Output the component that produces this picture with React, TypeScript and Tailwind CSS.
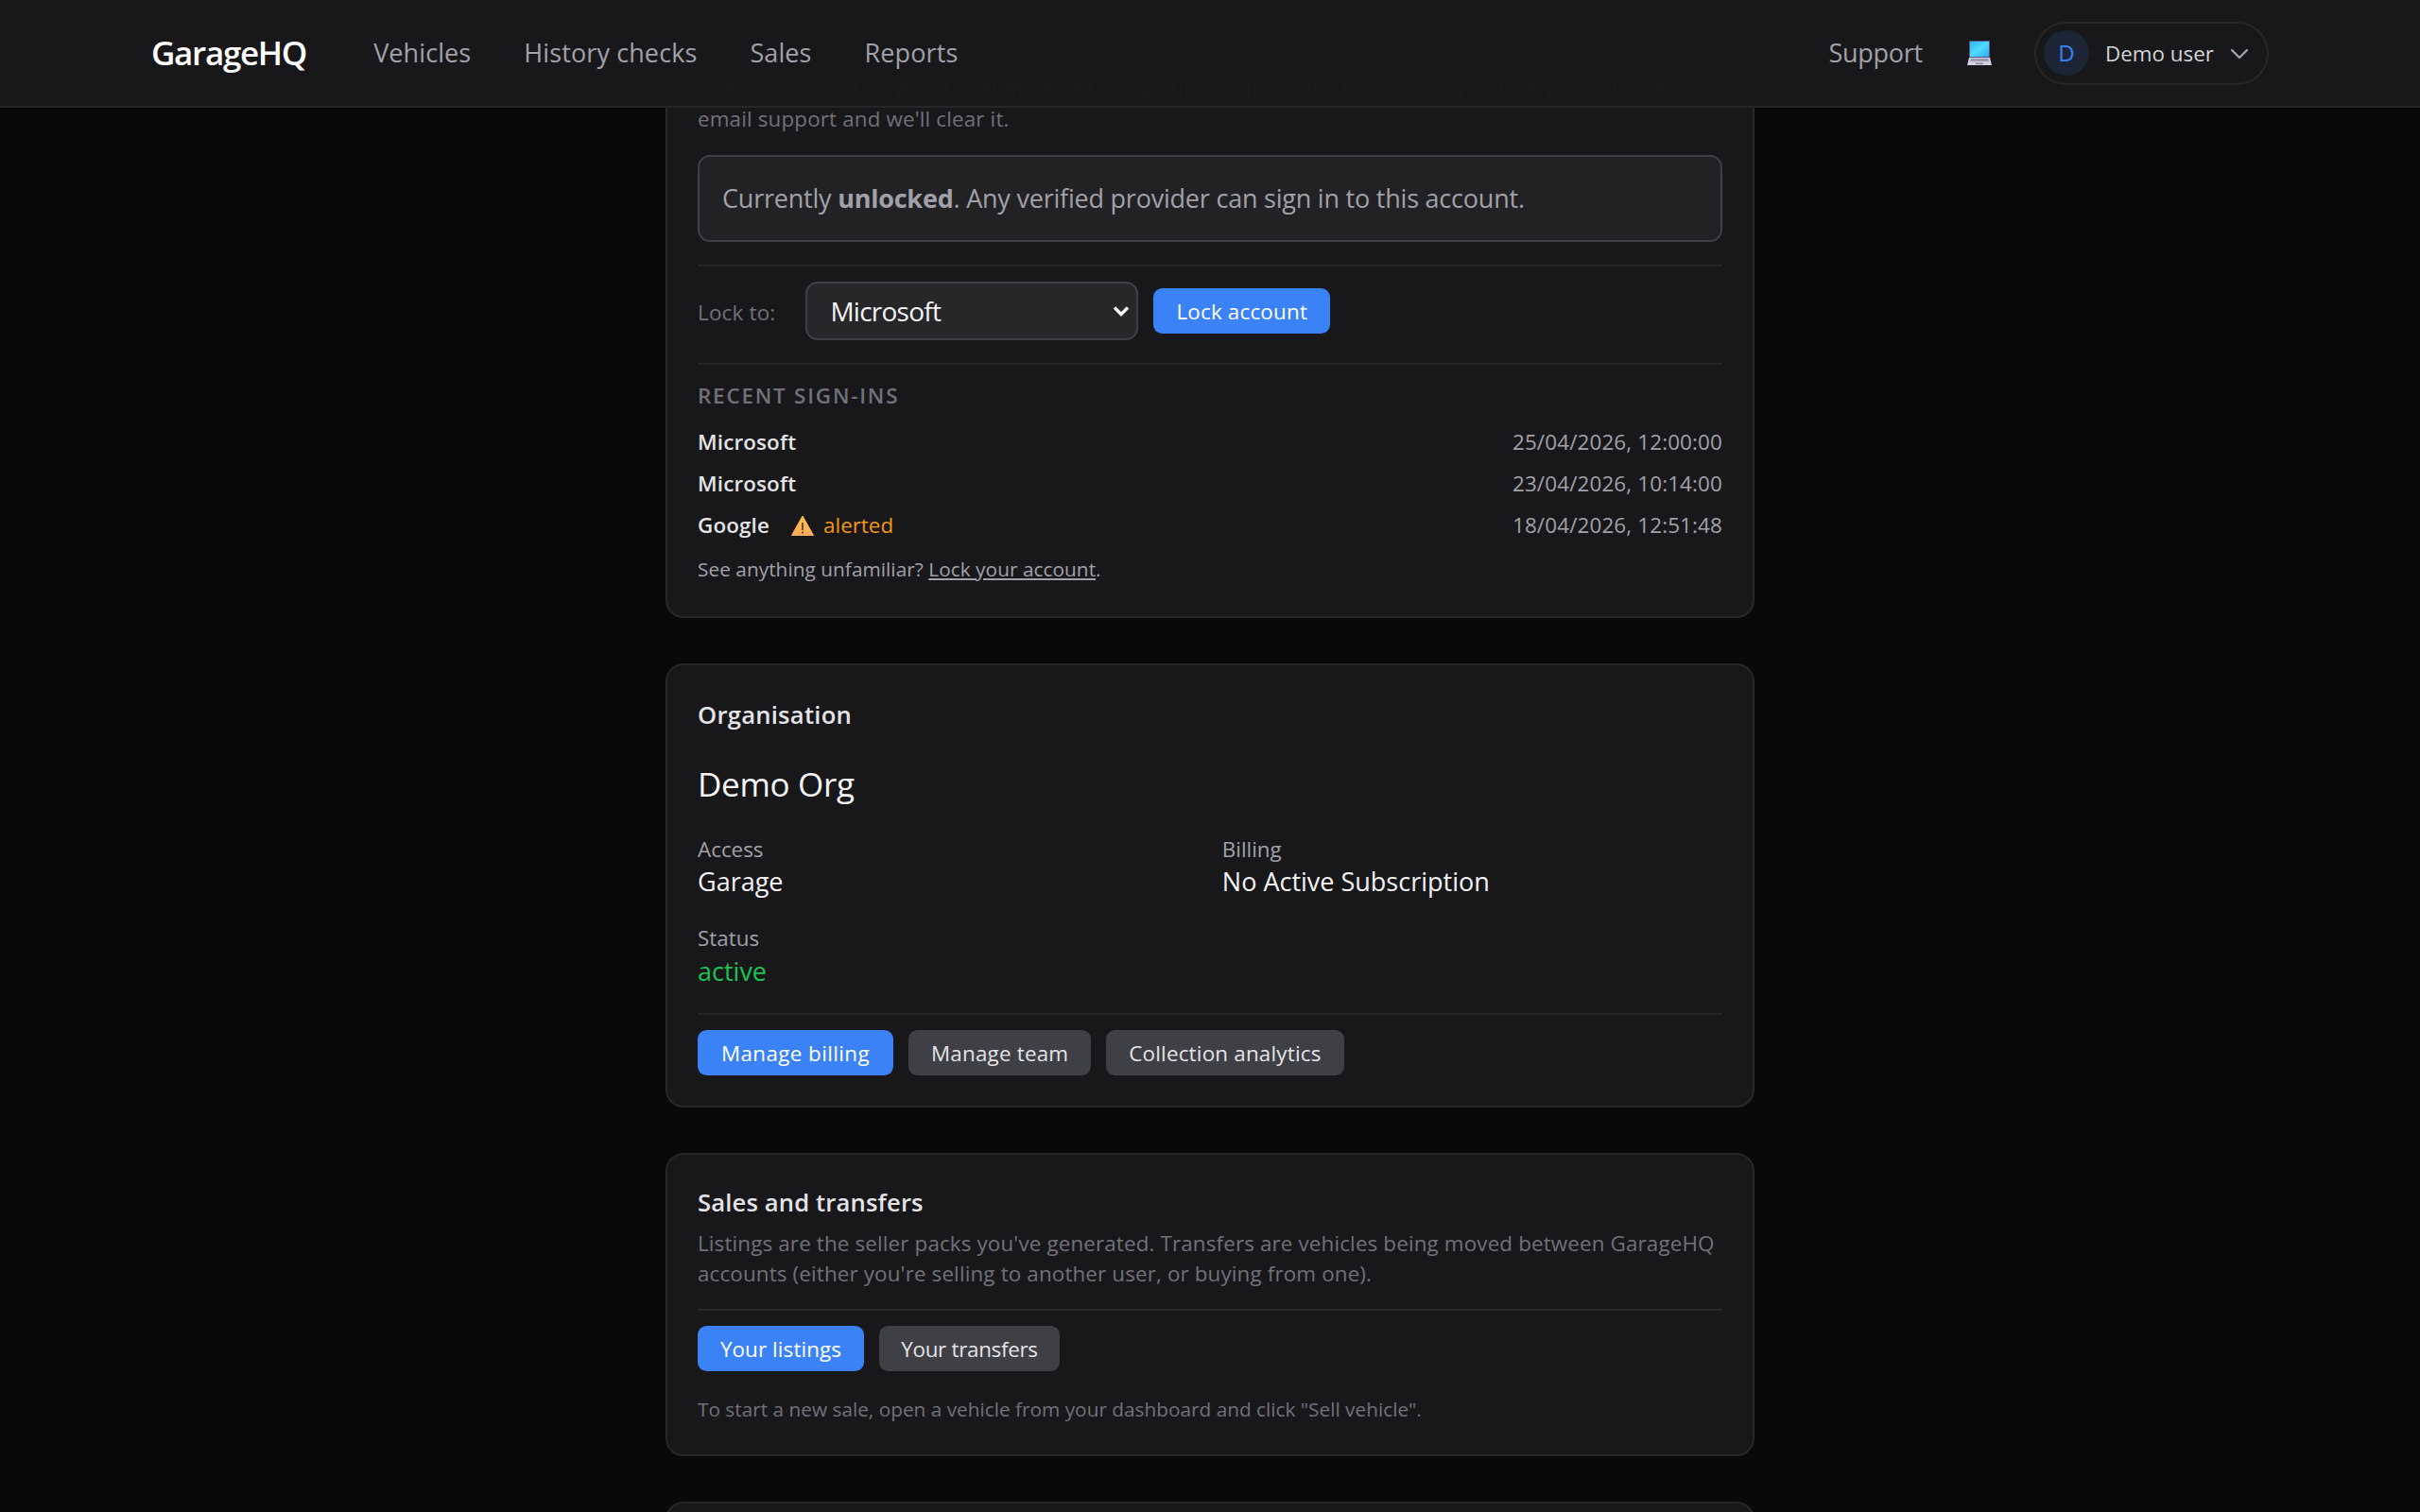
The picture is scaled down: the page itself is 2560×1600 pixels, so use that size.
import { ChevronDown } from "lucide-react";

const FONT = "font-['Open_Sans','Noto_Sans',sans-serif]";

function LaptopEmoji() {
  return (
    <svg viewBox="0 0 28 28" className="h-[28px] w-[28px]">
      <defs>
        <linearGradient id="screen" x1="0" y1="0" x2="1" y2="1">
          <stop offset="0" stopColor="#2fb4f0" />
          <stop offset="0.5" stopColor="#4fdcff" />
          <stop offset="1" stopColor="#2ea8e8" />
        </linearGradient>
      </defs>
      <rect x="3" y="1" width="22" height="18" rx="1" fill="#5b5390" />
      <rect x="4" y="2" width="20" height="16" fill="url(#screen)" />
      <path d="M3 19h22l2 8H1z" fill="#d3cfe2" />
      <path d="M5 20h18l1 3H4z" fill="#9c98ae" />
      <rect x="10" y="24.5" width="8" height="1.5" fill="#8a869c" />
    </svg>
  );
}

function WarningEmoji() {
  return (
    <svg viewBox="0 0 24 22" className="h-[22px] w-[24px]">
      <defs>
        <linearGradient id="warn" x1="0" y1="0" x2="0" y2="1">
          <stop offset="0" stopColor="#ffc045" />
          <stop offset="1" stopColor="#ffab62" />
        </linearGradient>
      </defs>
      <path d="M12 1 23.5 21.5H.5z" fill="url(#warn)" stroke="url(#warn)" strokeLinejoin="round" />
      <rect x="11" y="8" width="2" height="8" fill="#6b5330" />
      <rect x="11" y="17.5" width="2" height="2" fill="#6b5330" />
    </svg>
  );
}

function Button({ children, primary, className }: { children: string; primary?: boolean; className?: string }) {
  return (
    <button
      className={
        "h-12 rounded-[9.6px] pt-[2px] text-[22.4px] " +
        (primary ? "bg-[#3b82f6] text-white " : "bg-[#3f3f46] text-[#e4e4e7] ") +
        (className ?? "px-6 tracking-[0.2px]")
      }
    >
      {children}
    </button>
  );
}

function Card({ children, className }: { children: React.ReactNode; className: string }) {
  return (
    <section className={"rounded-[19px] border-2 border-[#27272a] bg-[#18181b] px-8 " + className}>
      {children}
    </section>
  );
}

function SignIn({ provider, date, alerted }: { provider: string; date: string; alerted?: boolean }) {
  return (
    <div className="flex h-11 items-center justify-between">
      <div className="flex items-center">
        <span className="text-[22.4px] font-semibold tracking-[0.15px] text-[#e4e4e7]">{provider}</span>
        {alerted && (
          <span className="ml-[23px] flex items-center gap-[10px] text-[22.4px] text-[#f5970b]">
            <WarningEmoji />
            alerted
          </span>
        )}
      </div>
      <span className="text-[22.4px] tracking-[0.15px] text-[#a1a1aa]">{date}</span>
    </div>
  );
}

function Field({ label, value, valueColor }: { label: string; value: string; valueColor: string }) {
  return (
    <div>
      <div className="text-[22.4px] text-[#a1a1aa]">{label}</div>
      <div className={"text-[27px] leading-[35px] " + valueColor}>{value}</div>
    </div>
  );
}

export default function App() {
  return (
    <div className={"relative h-[1600px] overflow-hidden bg-[#09090b] " + FONT}>
      <header className="absolute inset-x-0 top-0 z-10 flex h-[114px] items-center justify-between border-b-2 border-[#27272a] bg-[#18181b]/[0.98] px-[160px]">
        <div className="flex items-center gap-[56px]">
          <span className="mr-[15px] text-[35px] font-semibold tracking-[-1.3px] text-white">GarageHQ</span>
          <span className="text-[27px] font-medium tracking-[0.1px] text-[#a1a1aa]">Vehicles</span>
          <span className="text-[27px] font-medium tracking-[0.1px] text-[#a1a1aa]">History checks</span>
          <span className="text-[27px] font-medium tracking-[0.1px] text-[#a1a1aa]">Sales</span>
          <span className="text-[27px] font-medium tracking-[0.1px] text-[#a1a1aa]">Reports</span>
        </div>
        <div className="flex items-center">
          <span className="text-[27px] tracking-[-0.25px] text-[#a1a1aa]">Support</span>
          <span className="ml-[46px] mr-[44px]">
            <LaptopEmoji />
          </span>
          <div className="flex h-[67px] w-[248px] items-center rounded-full border-2 border-[#27272a] pl-[8px]">
            <span className="flex h-12 w-12 items-center justify-center rounded-full bg-[#1b2535] text-[24px] font-medium text-[#3b82f6]">
              D
            </span>
            <span className="ml-[17px] pt-[2px] text-[22.4px] text-[#d4d4d8]">Demo user</span>
            <ChevronDown className="ml-[11px] mt-[2px] h-[32px] w-[32px] text-[#a1a1aa]" strokeWidth={1.8} />
          </div>
        </div>
      </header>

      <main className="mx-auto w-[1152px]">
        <Card className="mt-[-44px] pb-[34px] pt-[120px]">
          <p className="text-[22.4px] leading-[32px] tracking-[0.15px] text-[#71717a]">
            lock the account to your usual method to stop further attempts. Recovery if you lock yourself out:
            <br />
            email support and we'll clear it.
          </p>
          <div className="mt-[22px] flex h-[92px] items-center rounded-[13px] border-2 border-[#3f3f46] bg-[#222225] px-6 text-[27px] tracking-[-0.22px] text-[#a1a1aa]">
            <span>
              Currently <strong className="font-bold">unlocked</strong>. Any verified provider can sign in to this
              account.
            </span>
          </div>
          <div className="mt-[24px] flex items-center border-t-2 border-[#27272a] pt-[16px]">
            <label className="pt-[3px] text-[22.4px] tracking-[0.2px] text-[#71717a]">Lock to:</label>
            <div className="relative ml-[32px]">
              <select
                defaultValue="Microsoft"
                className="block h-[62px] w-[352px] appearance-none rounded-[12.8px] border-2 border-[#3f3f46] bg-[#27272a] pl-6 pr-2 text-[28px] tracking-[-0.75px] text-[#f4f4f5]"
              >
                <option>Microsoft</option>
                <option>Google</option>
              </select>
              <svg viewBox="0 0 18 12" className="pointer-events-none absolute right-[9px] top-[25px] h-[12px] w-[18px]">
                <path d="M2 2.5 9 9.5 16 2.5" fill="none" stroke="#f4f4f5" strokeWidth="3.4" />
              </svg>
            </div>
            <span className="ml-[16px]">
              <Button primary>Lock account</Button>
            </span>
          </div>
          <div className="mt-[24px] border-t-2 border-[#27272a] pt-[16px]">
            <h3 className="text-[22.4px] font-semibold uppercase tracking-[1.8px] text-[#71717a]">Recent sign-ins</h3>
            <div className="mt-[10px]">
              <SignIn provider="Microsoft" date="25/04/2026, 12:00:00" />
              <SignIn provider="Microsoft" date="23/04/2026, 10:14:00" />
              <SignIn provider="Google" date="18/04/2026, 12:51:48" alerted />
            </div>
            <p className="mt-[9px] text-[20.8px] tracking-[0.04px] text-[#a1a1aa]">
              See anything unfamiliar? <a className="underline">Lock your account</a>.
            </p>
          </div>
        </Card>

        <Card className="mt-[48px] pb-[32px] pt-[34px]">
          <h2 className="text-[25.6px] font-semibold tracking-[0.25px] text-[#e4e4e7]">Organisation</h2>
          <div className="mt-[28px] text-[35px] tracking-[-0.3px] text-[#f4f4f5]">Demo Org</div>
          <div className="mt-[25px] grid grid-cols-2 gap-x-[25.6px] gap-y-[26px]">
            <Field label="Access" value="Garage" valueColor="text-[#f4f4f5]" />
            <Field label="Billing" value="No Active Subscription" valueColor="text-[#f4f4f5]" />
            <Field label="Status" value="active" valueColor="text-[#1cc253]" />
          </div>
          <div className="mt-[27px] flex gap-4 border-t-2 border-[#27272a] pt-[16px]">
            <Button primary className="w-[207px] tracking-[0.4px]">
              Manage billing
            </Button>
            <Button>Manage team</Button>
            <Button>Collection analytics</Button>
          </div>
        </Card>

        <Card className="mt-[48px] pb-[32px] pt-[32px]">
          <h2 className="text-[25.6px] font-semibold tracking-[0.15px] text-[#e4e4e7]">Sales and transfers</h2>
          <p className="mt-[8px] text-[22.4px] leading-[32px] tracking-[0.14px] text-[#71717a]">
            Listings are the seller packs you've generated. Transfers are vehicles being moved between GarageHQ
            accounts (either you're selling to another user, or buying from one).
          </p>
          <div className="mt-[21px] flex gap-4 border-t-2 border-[#27272a] pt-[16px]">
            <Button primary className="w-[176px] tracking-[0.1px]">
              Your listings
            </Button>
            <Button className="w-[191px] tracking-[-0.3px]">Your transfers</Button>
          </div>
          <p className="mt-[25px] text-[20.8px] text-[#71717a]">
            To start a new sale, open a vehicle from your dashboard and click "Sell vehicle".
          </p>
        </Card>

        <Card className="mt-[48px] h-[200px]">{null}</Card>
      </main>
    </div>
  );
}
